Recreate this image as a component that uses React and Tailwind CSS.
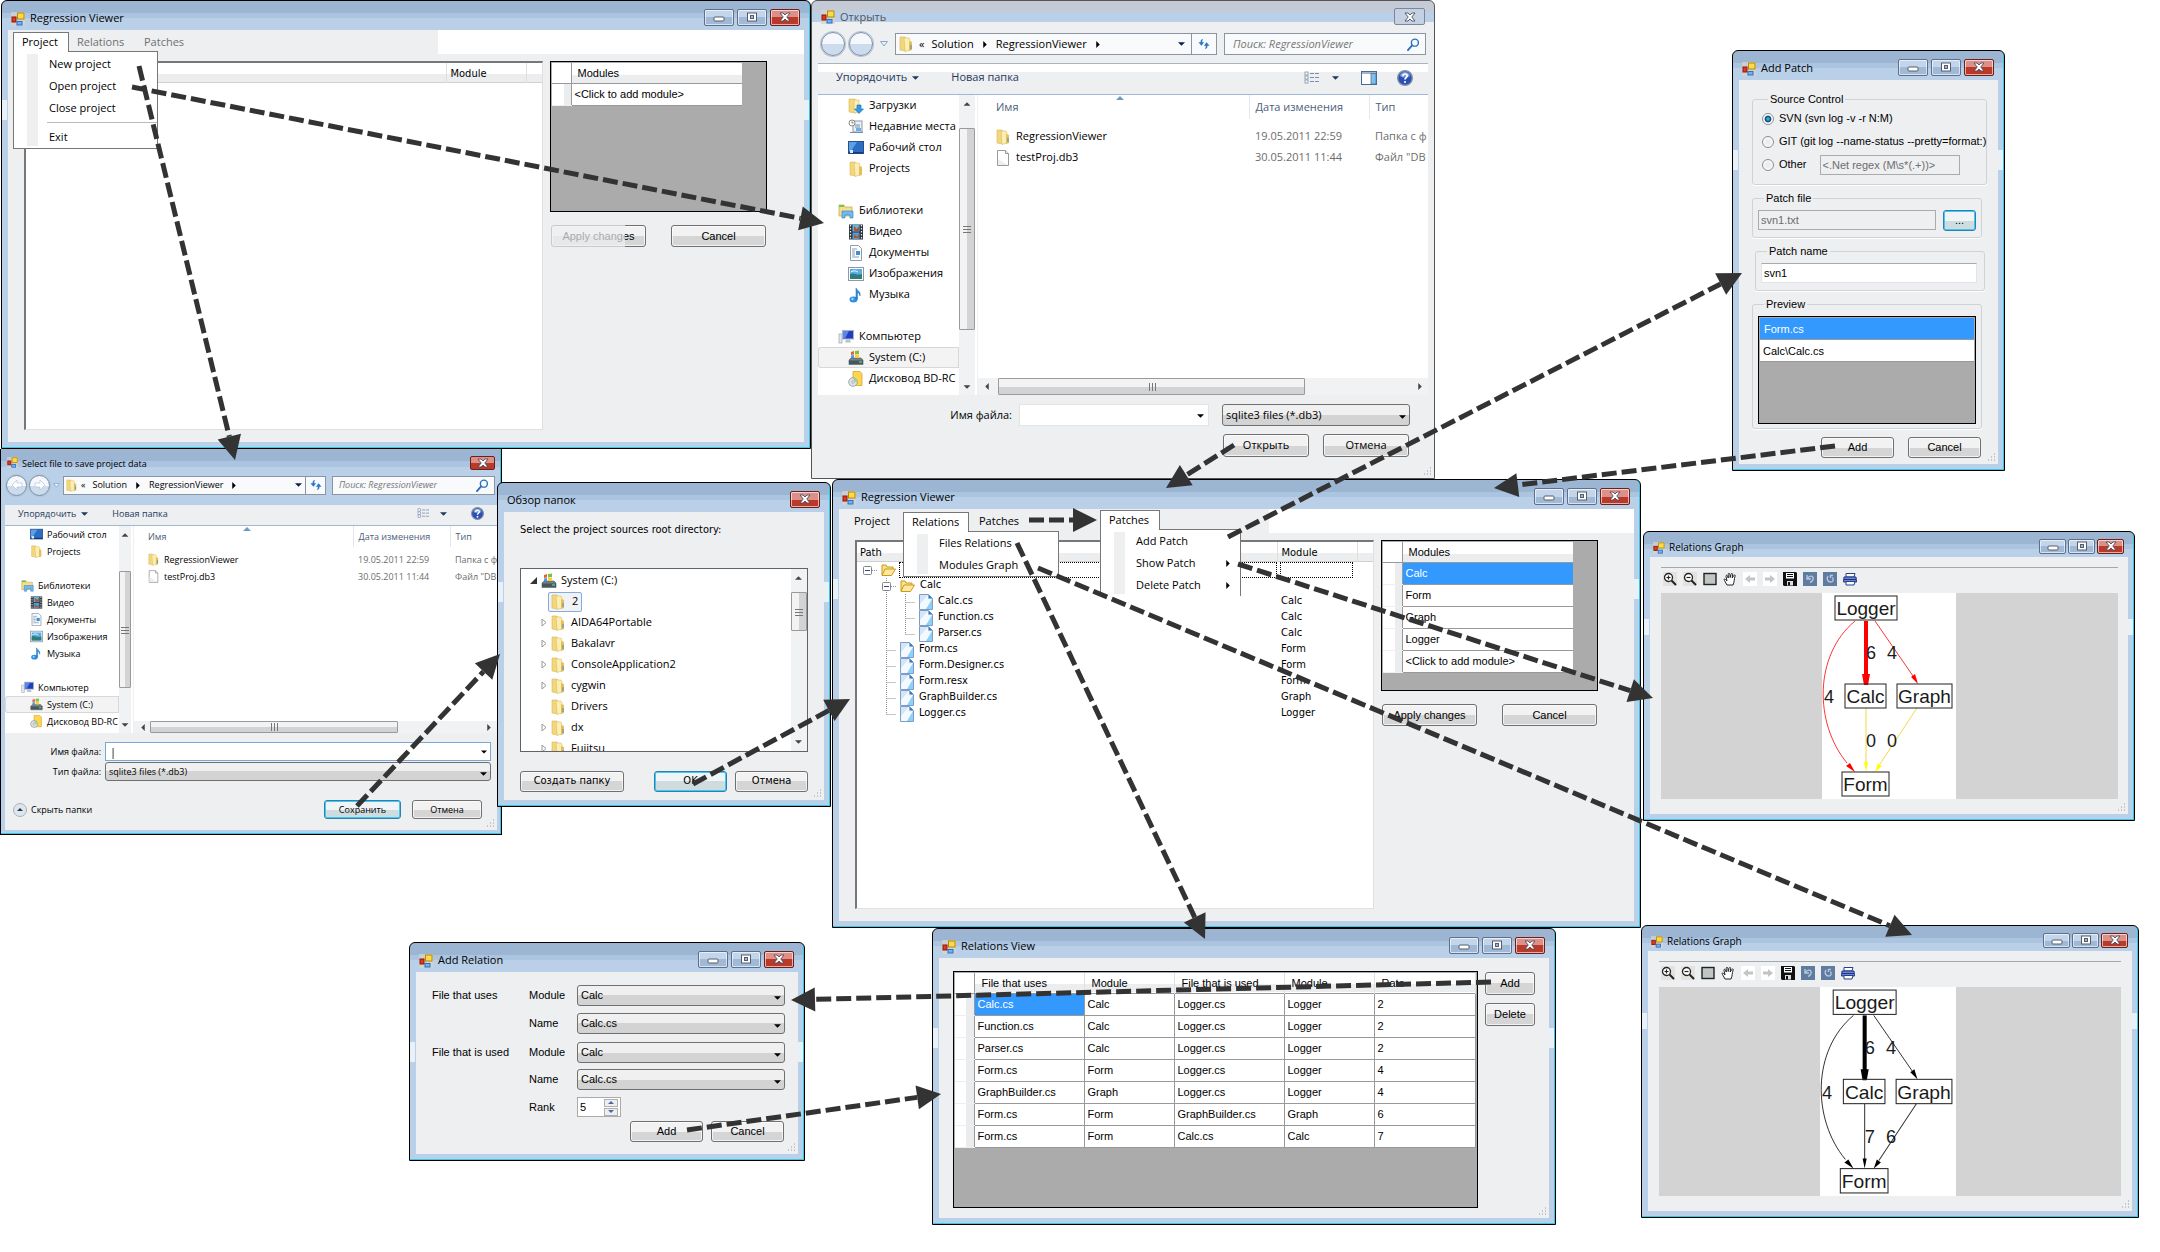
import React from "react";

const UI = "font-['Open_Sans','Noto_Sans',sans-serif]";
const SANS = "font-['Liberation_Sans',Arial,sans-serif]";
const TAHOMA = "font-['DejaVu_Sans_Condensed','DejaVu_Sans',sans-serif]";

/* ---------- icons ---------- */

function AppIcon({ className = "size-[14px]" }) {
  return (
    <svg viewBox="0 0 14 14" className={className} aria-hidden="true">
      <rect x="0" y="0" width="14" height="14" fill="#d8d4cc" opacity=".7" />
      <rect x="1" y="5" width="4" height="5" fill="#e03a1e" stroke="#8e1608" />
      <rect x="6.500" y="1" width="6.500" height="6" fill="#ffd84a" stroke="#b58a00" />
      <rect x="6" y="9.500" width="5" height="3.500" fill="#6fb2f5" stroke="#2f6fc4" />
    </svg>
  );
}

function Folder({ className }) {
  return (
    <svg viewBox="0 0 14 16" className={className} aria-hidden="true">
      <path d="M1 1h5l1 2v12l-6-1z" fill="#f3d77d" stroke="#d9b650" strokeWidth=".6" />
      <path d="M5 2h5l1 2v10l-5 1.500z" fill="#fbeeb4" stroke="#dcbc5c" strokeWidth=".6" />
      <path d="M10 5l3 1v8l-3 1z" fill="#e7bf58" />
      <path d="M12 9v4" stroke="#3f8fd0" strokeWidth="1" />
    </svg>
  );
}

function OpenFolder() {
  return (
    <svg viewBox="0 0 15 14" className="h-[14px] w-[15px] shrink-0" aria-hidden="true">
      <path d="M1 12V2h4l1 2h6v2" fill="#fbe08a" stroke="#c79a1b" />
      <path d="M1 12.500L4 6h10.500l-4 6.500z" fill="#ffe9a0" stroke="#c79a1b" />
    </svg>
  );
}

function CodeFile() {
  return (
    <svg viewBox="0 0 14 16" className="h-4 w-[14px] shrink-0" aria-hidden="true">
      <path d="M.5 .5h9l4 4v11H.5z" fill="#d3e6f7" stroke="#7f9cc4" />
      <path d="M1 10L9 1v4h4v2L7 15H1z" fill="#f4f9fe" />
      <path d="M13 5v10H7z" fill="#8fd0fb" />
      <path d="M9.500 .5v4h4z" fill="#3a78c8" />
    </svg>
  );
}

function BlankFile({ className }) {
  return (
    <svg viewBox="0 0 14 16" className={className} aria-hidden="true">
      <path d="M1.500 .5h8l3 3v12h-11z" fill="#fff" stroke="#9a9a9a" />
      <path d="M2 9l10 6H2z" fill="#eee" />
      <path d="M9.500 .5v3h3" fill="#eee" stroke="#9a9a9a" />
    </svg>
  );
}

function PlaceIcon({ kind, className }) {
  const shapes = {
    downloads: (
      <>
        <path d="M1 1h6l1 2v12l-7-1z" fill="#f3d77d" stroke="#d9b650" strokeWidth=".6" />
        <path d="M6 2h5v12l-5 1z" fill="#fbeeb4" stroke="#dcbc5c" strokeWidth=".6" />
        <path d="M9 7h4v4h2.500L11 15.500 6.500 11H9z" fill="#2f9be8" stroke="#1668b0" strokeWidth=".6" />
      </>
    ),
    recent: (
      <>
        <rect x="5" y="2" width="9" height="11" fill="#eef2f6" stroke="#8b97a5" />
        <path d="M7 6h5M7 8h5M2 13.500h13" stroke="#6f8fb0" />
        <path d="M8 9h5v3H8z" fill="#6fb0e0" />
        <circle cx="4" cy="4" r="3" fill="#fff" stroke="#888" />
        <path d="M4 2.500V4h1.500" stroke="#555" fill="none" strokeWidth=".8" />
      </>
    ),
    desktop: (
      <>
        <rect x=".5" y="1.500" width="15" height="12" fill="#2a6fc4" stroke="#2b4f86" />
        <path d="M1 2h8L3 11H1z" fill="#5ea0e6" />
        <path d="M1 12h14v1.500H1z" fill="#173a70" />
        <path d="M2 10h3v3H2z" fill="#dcecff" />
      </>
    ),
    libraries: (
      <>
        <path d="M1 2h5l1 2h7v9H1z" fill="#f6df8c" stroke="#c9a544" strokeWidth=".7" />
        <path d="M1 2h5v2H1z" fill="#7cc256" />
        <path d="M4 8h11v7h-3v-3H7v3H4z" fill="#6dbbf2" stroke="#3a88c8" strokeWidth=".7" />
      </>
    ),
    video: (
      <>
        <rect x="1" y=".5" width="14" height="15" fill="#2d333b" />
        <path d="M4.500 1h7v6.500h-7z" fill="#5db8e8" />
        <path d="M4.500 8.500h7V15h-7z" fill="#4a9fd4" />
        <path d="M6 2l3 3 2-3v5H6zM6 10l3 3 2-3v4H6z" fill="#b5502e" />
        <path d="M2.500 1v14M13.500 1v14" stroke="#e8eef2" strokeDasharray="1.500 1.500" strokeWidth="1.200" />
      </>
    ),
    documents: (
      <>
        <path d="M2.500 .5h8l3 3v12h-11z" fill="#fff" stroke="#8b9db0" />
        <path d="M4 4h5M4 6h3M4 8h3M4 10h3M4 12h7" stroke="#7a90a8" strokeWidth=".9" />
        <path d="M8 6h4v4H8z" fill="#3f8fd6" />
      </>
    ),
    pictures: (
      <>
        <rect x=".5" y="1.500" width="15" height="13" fill="#fff" stroke="#8d99a5" />
        <rect x="2" y="3" width="12" height="10" fill="#5aaee8" />
        <path d="M2 8c4-2 6 2 12 0v5H2z" fill="#2f7d78" />
        <path d="M3 6c3-2 5-1 7 0" stroke="#fff" fill="none" />
      </>
    ),
    music: (
      <>
        <ellipse cx="5.500" cy="12.500" rx="4" ry="3" fill="#2f8fe0" />
        <path d="M8 12V1c1 3 5 3 4 8-.5-3-2-3.500-2.500-3.500V12z" fill="#2f8fe0" stroke="#1b66b4" strokeWidth=".5" />
        <circle cx="4.500" cy="12" r="1.200" fill="#a6d8ff" />
      </>
    ),
    computer: (
      <>
        <rect x="1" y="5" width="3" height="9" fill="#e5e9ed" stroke="#98a3ae" strokeWidth=".7" />
        <rect x="4.500" y="1.500" width="11" height="8.500" fill="#1f3fc0" stroke="#aab4c0" />
        <path d="M5 2h6L7 9.500H5z" fill="#5b84ee" />
        <path d="M8 10.500h4l1 3H7z" fill="#b9c2cc" />
      </>
    ),
    drive: (
      <>
        <path d="M1 10l2-2h10l2 2v4.500H1z" fill="#71808c" stroke="#4b5863" strokeWidth=".6" />
        <path d="M1 10.500h14V14H1z" fill="#46565f" />
        <path d="M11 12h3" stroke="#56e070" strokeWidth="1.200" />
        <path d="M3 2l3-1v3.500L3 5z" fill="#f0602a" />
        <path d="M7 1l4-.5v3.500L7 4.500z" fill="#7cc23c" />
        <path d="M3 5.500L6 5v3H3z" fill="#4b9ae8" />
        <path d="M7 5l4-.5v3.500H7z" fill="#ffcd2e" />
      </>
    ),
    disc: (
      <>
        <path d="M5 .5h7l2 2v12H5z" fill="#ffd650" stroke="#d39f18" strokeWidth=".7" />
        <circle cx="5" cy="11" r="4.300" fill="#dfe3e6" stroke="#8d959c" strokeWidth=".8" />
        <circle cx="5" cy="11" r="1.300" fill="#fff" stroke="#8d959c" strokeWidth=".7" />
        <path d="M5 7a4 4 0 0 1 4 4H6.500z" fill="#9fd49a" />
      </>
    ),
    folder: (
      <>
        <path d="M2 1h5l1 2v12l-6-1z" fill="#f3d77d" stroke="#d9b650" strokeWidth=".6" />
        <path d="M6 2h5l1 2v10l-5 1.500z" fill="#fbeeb4" stroke="#dcbc5c" strokeWidth=".6" />
        <path d="M11 5l3 1v8l-3 1z" fill="#e7bf58" />
      </>
    ),
  };
  return (
    <svg viewBox="0 0 16 16" className={className} aria-hidden="true">
      {shapes[kind]}
    </svg>
  );
}

function Caret({ className = "h-[4px] w-[7px]" }) {
  return (
    <svg viewBox="0 0 8 4" className={className} aria-hidden="true">
      <path d="M0 0h8L4 4z" fill="currentColor" />
    </svg>
  );
}

function RightCaret({ className = "h-2 w-1" }) {
  return (
    <svg viewBox="0 0 4 8" className={className} aria-hidden="true">
      <path d="M0 0v8l4-4z" fill="currentColor" />
    </svg>
  );
}

function Magnifier({ className }) {
  return (
    <svg viewBox="0 0 14 14" className={className} aria-hidden="true">
      <circle cx="8.500" cy="5" r="3.800" fill="none" stroke="#2a6fc0" strokeWidth="1.500" />
      <path d="M5.500 8L1 13" stroke="#2a6fc0" strokeWidth="2" strokeLinecap="round" />
    </svg>
  );
}

function RefreshIcon({ className }) {
  return (
    <svg viewBox="0 0 14 14" className={className} aria-hidden="true">
      <path d="M6 1C3 2 3 3 3 5H.5L4 9l3.200-4H5c0-2 0-2 1-4z" fill="#2a78cc" />
      <path d="M8 13c3-1 3-2 3-4h2.500L10 5 6.800 9H9c0 2 0 2-1 4z" fill="#2a78cc" />
    </svg>
  );
}

function ViewIcon({ className }) {
  return (
    <svg viewBox="0 0 16 14" className={className} aria-hidden="true">
      {[1, 5, 9].map((y) => (
        <g key={y}>
          <rect x="1" y={y} width="3" height="3" fill="#fff" stroke="#7a8fae" strokeWidth=".8" />
          <path d={`M6 ${y + 1.5}h4M11 ${y + 1.5}h4`} stroke="#7a8fae" />
        </g>
      ))}
    </svg>
  );
}

function HelpIcon({ className }) {
  return (
    <svg viewBox="0 0 16 16" className={className} aria-hidden="true">
      <circle cx="8" cy="8" r="7.300" fill="#2b50b4" stroke="#8490a4" strokeWidth="1.400" />
      <path d="M3 6a5 4 0 0 1 10 0c-3 2-7 2-10 0z" fill="#7e9be0" />
      <path d="M5.800 6.200c0-3 4.600-2.800 4.400-.2C10 7.600 8 7.700 8 9.600" fill="none" stroke="#fff" strokeWidth="1.700" />
      <circle cx="8" cy="12" r="1.100" fill="#fff" />
    </svg>
  );
}

function Grip() {
  return (
    <svg viewBox="0 0 9 9" className="absolute right-[2px] bottom-[2px] size-[9px]" aria-hidden="true">
      <path d="M7 1h1M7 4h1M4 4h1M7 7h1M4 7h1M1 7h1" stroke="#b4b8bc" strokeWidth="1.500" />
    </svg>
  );
}

/* ---------- window frame ---------- */

function WindowButtons({ small, only }) {
  const size = small ? "h-[15px] w-[27px]" : "h-[17px] w-[30px]";
  const base = `${size} flex items-center justify-center rounded-[2px] border shadow-[inset_0_0_0_1px_rgba(255,255,255,.6)]`;
  const blue = "border-[#5d6f8a] bg-[linear-gradient(#c3d5ea_0_50%,#a0b9d6_50%)]";
  return (
    <div className={small ? "flex gap-[2px]" : "flex gap-[3px]"}>
      {!only && (
        <>
          <button aria-label="Minimize" className={`${base} ${blue}`}>
            <svg viewBox="0 0 12 12" className="size-3"><rect x="1" y="6" width="10" height="4" rx="1" fill="#fff" stroke="#555d6b" /></svg>
          </button>
          <button aria-label="Maximize" className={`${base} ${blue}`}>
            <svg viewBox="0 0 12 12" className="size-3"><rect x="1.500" y="2" width="9" height="8" fill="#fff" stroke="#555d6b" /><rect x="4.500" y="4.500" width="3" height="3" fill="#a0b9d6" stroke="#555d6b" /></svg>
          </button>
        </>
      )}
      <button aria-label="Close" className={`${base} border-[#6d1f18] bg-[linear-gradient(#dc9088_0_50%,#b93a2a_50%)]`}>
        <CloseGlyph />
      </button>
    </div>
  );
}

function CloseGlyph() {
  return (
    <svg viewBox="0 0 12 10" className="h-[10px] w-3" aria-hidden="true">
      <path d="M1 1h3l2 2 2-2h3L7.800 5 11 9H8L6 7 4 9H1l3.200-4z" fill="#fff" stroke="#4b4f5e" strokeWidth=".9" />
    </svg>
  );
}

function Window({ place, title, icon = true, small, only, children, head = "h-[29px]" }) {
  const notch = small ? "top-[87px] h-4" : "top-[99px] h-5";
  return (
    <section
      aria-label={title}
      className={`absolute flex flex-col rounded-t-[6px] border border-black bg-[linear-gradient(#9cb5d3_0_12px,#abc4e0_12px_17px,#b9d0e8_17px)] px-[6px] pb-[6px] shadow-[inset_-1px_-1px_0_#35c8e4] ${place}`}
    >
      <span className={`absolute left-0 w-[5px] bg-[#e9f0f7] ${notch}`} />
      <span className={`absolute right-[1px] w-[5px] bg-[#e9f0f7] ${notch}`} />
      <header className={`flex shrink-0 items-center pt-[6px] pr-1 pl-[3px] ${head}`}>
        {icon && <AppIcon className={small ? "mr-[4px] size-3" : "mr-[5px] size-[14px]"} />}
        <h2 className={`flex-1 text-black ${UI} ${small ? "text-[10px]" : "text-[11px]"}`}>{title}</h2>
        <div className="pb-[3px]"><WindowButtons small={small} only={only} /></div>
      </header>
      <div className="relative flex min-h-0 flex-1 flex-col bg-[#edeff1]">{children}</div>
    </section>
  );
}

const BTN = `flex items-center justify-center rounded-[3px] border border-[#707070] bg-[linear-gradient(#f2f2f2_0_50%,#d5d5d5_50%)] text-black shadow-[inset_0_0_0_1px_rgba(255,255,255,.7)]`;
const BTN_FOCUS = `flex items-center justify-center rounded-[3px] border border-[#2f7fb0] bg-[linear-gradient(#f0f4f6_0_50%,#cfdcdf_50%)] text-black shadow-[inset_0_0_0_1px_#3fcaf0]`;

function Select({ label, value, className, font = SANS, text = "text-[11px]" }) {
  return (
    <span className={`relative block ${className}`}>
      <select
        aria-label={label}
        defaultValue={value}
        className={`h-full w-full appearance-none rounded-[3px] border border-[#707070] bg-[linear-gradient(#f0f0f0_0_50%,#d3d3d3_50%)] pl-[3px] text-black ${font} ${text}`}
      >
        <option>{value}</option>
      </select>
      <Caret className="pointer-events-none absolute top-1/2 right-[4px] h-1 w-[7px]" />
    </span>
  );
}

/* ---------- main window ---------- */

const HEAD_BG = "bg-[linear-gradient(#fff_0_60%,#ebedef_60%)]";

function TreeSlot({ kind }) {
  const d = {
    line: "M9.5 0v16",
    tee: "M9.5 0v16M9.5 8.5H19",
    end: "M9.5 0v8.5M9.5 8.5H19",
    root: "M14 8.5h5",
    node: "M9.5 0v16M14 8.500h5",
  }[kind];
  return (
    <svg viewBox="0 0 19 16" className="h-4 w-[19px] shrink-0" aria-hidden="true">
      {d && <path d={d} stroke="#909090" strokeDasharray="1 1" fill="none" />}
      {(kind === "root" || kind === "node") && (
        <g>
          <rect x="5.500" y="4.500" width="8" height="8" rx="1" fill="#fff" stroke="#848484" />
          <path d="M7 8.500h5" stroke="#2a4a9a" />
        </g>
      )}
    </svg>
  );
}

const TREE = [
  { slots: ["blank", "node"], name: "Calc", folder: true, module: "" },
  { slots: ["blank", "line", "tee"], name: "Calc.cs", module: "Calc" },
  { slots: ["blank", "line", "tee"], name: "Function.cs", module: "Calc" },
  { slots: ["blank", "line", "end"], name: "Parser.cs", module: "Calc" },
  { slots: ["blank", "tee"], name: "Form.cs", module: "Form" },
  { slots: ["blank", "tee"], name: "Form.Designer.cs", module: "Form" },
  { slots: ["blank", "tee"], name: "Form.resx", module: "Form" },
  { slots: ["blank", "tee"], name: "GraphBuilder.cs", module: "Graph" },
  { slots: ["blank", "end"], name: "Logger.cs", module: "Logger" },
];

function FileTree({ filled }) {
  return (
    <div className="h-[369px] w-[519px] shrink-0 border border-t-2 border-l-2 border-[#e0e0e0] border-t-[#777] border-l-[#777] bg-white">
      <table className={`w-full table-fixed border-collapse text-left text-[11px] ${TAHOMA}`}>
        <colgroup>
          <col className="w-[420px]" />
          <col className="w-[80px]" />
          <col />
        </colgroup>
        <thead>
          <tr className={`h-[19px] border-b border-[#d0d0d0] ${HEAD_BG}`}>
            <th className="border-r border-[#e0e0e0] pt-[3px] pb-0 pl-[3px] leading-4 font-normal">{filled ? "Path" : ""}</th>
            <th className="border-r border-[#e0e0e0] pt-[3px] pb-0 pl-[4px] leading-4 font-normal">Module</th>
            <th />
          </tr>
        </thead>
        {filled && (
          <tbody>
            <tr className="h-4">
              <td className="p-0">
                <div className="flex h-4 items-center pl-[1px]">
                  <TreeSlot kind="root" />
                  <span className="w-1" />
                  <OpenFolder />
                  <span className="ml-[3px] h-4 flex-1 border border-dotted border-black" />
                </div>
              </td>
              <td className="py-0 pr-1 pl-[3px]"><div className="h-4 border border-dotted border-black" /></td>
              <td />
            </tr>
            {TREE.map((r) => (
              <tr key={r.name} className="h-4">
                <td className="p-0">
                  <div className="flex h-4 items-center pl-[1px]">
                    {r.slots.map((s, i) => <TreeSlot key={i} kind={s} />)}
                    <span className="w-1" />
                    {r.folder ? <OpenFolder /> : <CodeFile />}
                    <span className="pb-[2px] pl-[5px] leading-[14px]">{r.name}</span>
                  </div>
                </td>
                <td className="py-0 pb-[2px] pl-[4px] leading-[14px]">{r.module}</td>
                <td />
              </tr>
            ))}
          </tbody>
        )}
      </table>
    </div>
  );
}

function ModulesGrid({ modules }) {
  const rows = [...modules, "<Click to add module>"];
  return (
    <div className="h-[151px] border border-black bg-[#ababab] p-[1px]">
      <table className={`w-[190px] table-fixed border-collapse text-left text-[11px] ${SANS}`}>
        <colgroup>
          <col className="w-[19px]" />
          <col />
        </colgroup>
        <thead>
          <tr className="h-[20px] border-b border-[#999]">
            <th className="border-r border-[#999] bg-white" />
            <th className={`pl-[6px] font-normal ${HEAD_BG}`}>Modules</th>
          </tr>
        </thead>
        <tbody>
          {rows.map((m, i) => (
            <tr key={m} className="h-[22px]">
              <td className="border-r border-b border-r-[#999] border-b-[#eee] bg-[linear-gradient(90deg,#fff_0_65%,#eaecee_65%)]" />
              <td className={`border-b border-[#999] py-0 pl-[3px] ${modules.length && i === 0 ? "bg-[#3399ff] text-white" : "bg-white"}`}>{m}</td>
            </tr>
          ))}
        </tbody>
      </table>
    </div>
  );
}

function DropItem({ children, sub }) {
  return (
    <li>
      <button className="flex h-[22px] w-full items-center pl-[35px] text-left leading-[22px]">
        <span className="flex-1">{children}</span>
        {sub && <RightCaret className="mr-[10px] h-[7px] w-1" />}
      </button>
    </li>
  );
}

function DropMenu({ className, children }) {
  return (
    <div className={`absolute bg-white ${className}`}>
      <span className="absolute top-[2px] bottom-[2px] left-[13px] w-[11px] bg-[#edeff1]" />
      <ul className="relative">{children}</ul>
    </div>
  );
}

function MainClient({ nav, filled, modules, disabledApply }) {
  return (
    <>
      <div className={`flex h-6 text-[11px] ${UI}`}>
        <nav className="flex w-[430px]">{nav}</nav>
        <div className="flex-1 bg-white" />
      </div>
      <div className="mt-[7px] flex gap-[7px] pl-4">
        <FileTree filled={filled} />
        <div className="w-[217px]">
          <ModulesGrid modules={modules} />
          <div className={`mt-[13px] flex justify-between px-[1px] text-[11px] ${SANS}`}>
            <button className={`relative h-[22px] w-[95px] ${BTN}`}>
              Apply changes
              {disabledApply && <span className="absolute -inset-y-px -left-px w-[74px] bg-[#edeff1]/70" />}
            </button>
            <button className={`h-[22px] w-[95px] ${BTN}`}>Cancel</button>
          </div>
        </div>
      </div>
    </>
  );
}

function MainWindowProject() {
  return (
    <Window place="left-[1px] top-0 h-[449px] w-[810px]" title="Regression Viewer">
      <MainClient
        modules={[]}
        disabledApply
        nav={
          <>
            <button className="relative z-20 mt-[2px] ml-[5px] h-[20px] w-[56px] border border-b-0 border-[#777] bg-white pl-2 text-left">Project</button>
            <button className="w-[67px] pl-2 text-left text-[#6f6f6f]">Relations</button>
            <button className="w-[67px] pl-2 text-left text-[#6f6f6f]">Patches</button>
            <DropMenu className="top-[21px] left-[5px] z-10 h-[98px] w-[145px] border border-[#777] pt-[1px]">
              <DropItem>New project</DropItem>
              <DropItem>Open project</DropItem>
              <DropItem>Close project</DropItem>
              <li className="my-[3px] ml-[33px] h-[1px] bg-[#bbb]" />
              <DropItem>Exit</DropItem>
            </DropMenu>
          </>
        }
      />
    </Window>
  );
}

function MainWindowLoaded() {
  return (
    <Window place="left-[832px] top-[479px] h-[449px] w-[809px]" title="Regression Viewer">
      <MainClient
        filled
        modules={["Calc", "Form", "Graph", "Logger"]}
        nav={
          <>
            <button className="w-[64px] pl-[15px] text-left">Project</button>
            <button className="relative z-20 mt-[3px] h-[20px] w-[66px] border border-b-0 border-[#777] bg-white pl-2 text-left">Relations</button>
            <button className="w-[60px] pl-[10px] text-left">Patches</button>
            <DropMenu className="top-[22px] left-[64px] z-10 w-[156px] border border-[#777]">
              <DropItem>Files Relations</DropItem>
              <DropItem>Modules Graph</DropItem>
            </DropMenu>
            <div className="absolute top-[1px] left-[261px] z-10 w-[140px]">
              <button className="relative z-20 h-[20px] w-[60px] border border-b-0 border-[#777] bg-white pl-2 text-left">Patches</button>
              <DropMenu className="top-[19px] left-0 w-[141px] border border-b-0 border-[#777]">
                <DropItem>Add Patch</DropItem>
                <DropItem sub>Show Patch</DropItem>
                <DropItem sub>Delete Patch</DropItem>
              </DropMenu>
            </div>
          </>
        }
      />
    </Window>
  );
}

/* ---------- file dialogs ---------- */

const LG = {
  text: "text-[11px]",
  nav: "h-[42px] pl-[9px] pr-[8px]",
  circle: "size-6",
  circleGap: "gap-[4px]",
  caretGap: "mx-[7px] h-[6px] w-[8px]",
  address: "h-[22px]",
  addrFolder: "h-4 w-[14px] ml-[3px] mr-[6px]",
  addrCaret: "mr-[6px] h-1 w-[7px]",
  refresh: "w-[25px]",
  search: "w-[202px] ml-[7px] pl-[8px]",
  toolbar: "h-[30px] pr-[24px] pl-[24px] pb-[3px]",
  body: "mx-[6px] h-[301px]",
  side: "w-[141px]",
  item: "h-[21px]",
  child: "pl-[30px]",
  parent: "pl-[20px]",
  icon: "size-4 mr-[5px]",
  vbar: "w-[16px]",
  thumb: "mt-[33px] h-[202px]",
  sort: "left-[138px]",
  cols: ["w-[271px]", "w-[120px]"],
  name: "pl-[18px]",
  cell: "pl-[6px]",
  thead: "h-[24px]",
  spacer: "h-[7px]",
  row: "h-[21px]",
  hbar: "h-[17px]",
  hthumb: "ml-[9px] w-[307px]",
  fileIcon: "h-4 w-[14px] mr-[6px]",
};
const SM = {
  text: "text-[9px]",
  nav: "h-[26px] pl-[5px] pr-[6px]",
  circle: "size-[21px]",
  circleGap: "gap-[2px]",
  caretGap: "mx-[3px] h-[5px] w-[7px]",
  address: "h-[19px]",
  addrFolder: "h-[13px] w-[11px] ml-[2px] mr-[4px]",
  addrCaret: "mr-[3px] h-1 w-[7px]",
  refresh: "w-5",
  search: "w-[163px] ml-[6px] pl-[6px]",
  toolbar: "h-[20px] px-[16px] pb-[3px]",
  body: "mx-[3px] h-[208px]",
  side: "w-[114px]",
  item: "h-[17px]",
  child: "pl-[25px]",
  parent: "pl-[16px]",
  icon: "size-[13px] mr-[4px]",
  vbar: "w-[12px]",
  thumb: "mt-[45px] h-[117px]",
  sort: "left-[109px]",
  cols: ["w-[219px]", "w-[97px]"],
  name: "pl-[14px]",
  cell: "pl-[5px]",
  thead: "h-[21px]",
  spacer: "h-[4px]",
  row: "h-[17px]",
  hbar: "h-[12px]",
  hthumb: "ml-[5px] w-[248px]",
  fileIcon: "h-[13px] w-[11px] mr-[5px]",
};

const LIBS = [
  null,
  ["libraries", "Библиотеки", true],
  ["video", "Видео"],
  ["documents", "Документы"],
  ["pictures", "Изображения"],
  ["music", "Музыка"],
  null,
  ["computer", "Компьютер", true],
  ["drive", "System (C:)", false, true],
  ["disc", "Дисковод BD-RC"],
];
const FILES = [
  ["RegressionViewer", "19.05.2011 22:59", "Папка с ф"],
  ["testProj.db3", "30.05.2011 11:44", 'Файл "DB'],
];

function DialogNav({ s, arrows }) {
  const circle = `${s.circle} flex items-center justify-center rounded-full border border-[#7f8fa3] bg-[linear-gradient(#f4f8fc_0_50%,#cddcec_50%)] shadow-[0_0_0_1px_#b4c6da]`;
  return (
    <div className={`flex shrink-0 items-center ${s.nav} ${s.text}`}>
      <div className={`flex ${s.circleGap}`}>
        <button aria-label="Back" className={circle}>
          {arrows && <svg viewBox="0 0 12 12" className="size-3"><path d="M6 1v3h5v4H6v3L1 6z" fill="#fff" stroke="#a9bdd3" strokeWidth=".6" /></svg>}
        </button>
        <button aria-label="Forward" className={circle}>
          {arrows && <svg viewBox="0 0 12 12" className="size-3"><path d="M6 1v3H1v4h5v3l5-5z" fill="#fff" stroke="#a9bdd3" strokeWidth=".6" /></svg>}
        </button>
      </div>
      <svg viewBox="0 0 8 6" className={s.caretGap}><path d="M.5 .5h7L4 5z" fill="#e6f0fa" stroke="#8ea7c6" /></svg>
      <div className={`flex flex-1 items-center border border-[#8a94a2] bg-[#f8fafb] ${s.address}`}>
        <Folder className={s.addrFolder} />
        <span className="mr-[7px]">«</span>
        <span className="mr-[9px]">Solution</span>
        <RightCaret className="h-[7px] w-1" />
        <span className="mx-[9px]">RegressionViewer</span>
        <RightCaret className="h-[7px] w-1" />
        <span className="flex-1" />
        <Caret className={`text-[#0b1f4a] ${s.addrCaret}`} />
        <button aria-label="Refresh" className={`flex h-full items-center justify-center border-l border-[#8a94a2] ${s.refresh}`}>
          <RefreshIcon className="size-3" />
        </button>
      </div>
      <div className={`flex items-center border border-[#8a94a2] bg-[#f8fafb] pr-[5px] ${s.address} ${s.search}`}>
        <input aria-label="Поиск" placeholder="Поиск: RegressionViewer" className="min-w-0 flex-1 bg-transparent italic outline-none placeholder:text-[#777]" />
        <Magnifier className="size-[13px]" />
      </div>
    </div>
  );
}

function DialogBody({ s, places, preview }) {
  const bar = "border border-[#9a9a9a] rounded-[1px]";
  return (
    <>
      <div className={`flex shrink-0 items-center text-[#1e395b] ${s.toolbar} ${s.text}`}>
        <button className="flex items-center gap-[5px]">Упорядочить <Caret className="h-1 w-[7px]" /></button>
        <button className={preview ? "ml-[32px]" : "ml-[24px]"}>Новая папка</button>
        <span className="flex-1" />
        <button aria-label="Views" className={`flex items-center ${preview ? "gap-[12px]" : "gap-[10px]"}`}>
          <ViewIcon className={preview ? "h-[14px] w-4" : "h-[11px] w-[13px]"} />
          <Caret className="h-1 w-[7px]" />
        </button>
        {preview && (
          <button aria-label="Preview pane" className="mr-[20px] ml-[22px]">
            <svg viewBox="0 0 16 14" className="h-[14px] w-4"><rect x=".5" y=".5" width="15" height="13" fill="#fff" stroke="#4b6a94" /><path d="M1 2h14" stroke="#4b6a94" /><rect x="10" y="2.500" width="5" height="10.500" fill="#7cc0f0" stroke="#4b6a94" strokeWidth=".7" /></svg>
          </button>
        )}
        <button aria-label="Help" className={preview ? "-mr-[3px]" : "ml-[24px]"}>
          <HelpIcon className={preview ? "size-4" : "size-[13px]"} />
        </button>
      </div>
      <div className={`flex shrink-0 border-t border-[#9db9d8] bg-white ${s.body} ${s.text}`}>
        <ul className={`overflow-hidden whitespace-nowrap ${s.side}`}>
          {[...places, ...LIBS].map((p, i) =>
            p ? (
              <li key={i} className={`flex items-center ${s.item} ${p[2] ? s.parent : s.child} ${p[3] ? "rounded-l-[3px] bg-[#f3f3f3] shadow-[inset_0_0_0_1px_#d8d8d8]" : ""}`}>
                <PlaceIcon kind={p[0]} className={`shrink-0 ${s.icon}`} />
                {p[1]}
              </li>
            ) : (
              <li key={i} className={s.item} />
            )
          )}
        </ul>
        <div className={`relative bg-[#f1f2f3] ${s.vbar}`}>
          <svg viewBox="0 0 8 4" className="absolute top-[7px] left-1/2 h-[4px] w-[7px] -translate-x-1/2"><path d="M0 4h8L4 0z" fill="#444" /></svg>
          <div className={`flex items-center justify-center bg-[linear-gradient(90deg,#f3f3f3_0_50%,#d2d3d5_50%)] ${bar} ${s.thumb}`}>
            <svg viewBox="0 0 8 8" className="size-2"><path d="M0 1.500h8M0 4.500h8M0 7.500h8" stroke="#777" /></svg>
          </div>
          <Caret className="absolute bottom-[6px] left-1/2 h-[4px] w-[7px] -translate-x-1/2 text-[#444]" />
        </div>
        <div className="ml-[2px] flex min-w-0 flex-1 flex-col overflow-hidden border-l border-[#eef1f4]">
          <div className="relative min-h-0 flex-1">
            <svg viewBox="0 0 8 4" className={`absolute top-[1px] h-1 w-2 ${s.sort}`}><path d="M0 4h8L4 0z" fill="#6a9cc4" /></svg>
            <table className="w-full table-fixed border-collapse text-left whitespace-nowrap">
              <colgroup>
                <col className={s.cols[0]} />
                <col className={s.cols[1]} />
                <col />
              </colgroup>
              <thead>
                <tr className={`text-[#4c607a] ${s.thead}`}>
                  <th className={`border-r border-[#e3e8ee] py-0 font-normal ${s.name}`}>Имя</th>
                  <th className={`border-r border-[#e3e8ee] py-0 font-normal ${s.cell}`}>Дата изменения</th>
                  <th className={`py-0 font-normal ${s.cell}`}>Тип</th>
                </tr>
              </thead>
              <tbody>
                <tr className={s.spacer}><td className="p-0" /></tr>
                {FILES.map((f, i) => (
                  <tr key={f[0]} className={s.row}>
                    <td className={`py-0 ${s.name}`}>
                      <span className="flex items-center">
                        {i === 0 ? <Folder className={s.fileIcon} /> : <BlankFile className={s.fileIcon} />}
                        {f[0]}
                      </span>
                    </td>
                    <td className={`py-0 text-[#6d6d6d] ${s.cell}`}>{f[1]}</td>
                    <td className={`py-0 text-[#6d6d6d] ${s.cell}`}>{f[2]}</td>
                  </tr>
                ))}
              </tbody>
            </table>
          </div>
          <div className={`flex shrink-0 items-center bg-[#f1f2f3] pr-[6px] pl-[7px] ${s.hbar}`}>
            <RightCaret className="h-[7px] w-1 rotate-180 text-[#444]" />
            <div className={`flex h-full items-center justify-center bg-[linear-gradient(#f3f3f3_0_50%,#d2d3d5_50%)] ${bar} ${s.hthumb}`}>
              <svg viewBox="0 0 8 8" className="size-2"><path d="M1.500 0v8M4.500 0v8M7.500 0v8" stroke="#777" /></svg>
            </div>
            <span className="flex-1" />
            <RightCaret className="h-[7px] w-1 text-[#444]" />
          </div>
        </div>
      </div>
    </>
  );
}

function OpenDialog() {
  return (
    <section
      aria-label="Открыть"
      className={`absolute top-0 left-[811px] flex h-[479px] w-[624px] flex-col rounded-t-[6px] border border-[#555] bg-[linear-gradient(#c5cbd6_0_11px,#b9d0e8_11px_21px,#edeff1_21px)] ${UI}`}
    >
      <header className="flex h-[22px] shrink-0 items-start px-[9px]">
        <AppIcon className="mt-[9px] size-[14px]" />
        <h2 className="mt-[8px] ml-[5px] flex-1 text-[11px] leading-4 text-[#555]">Открыть</h2>
        <button aria-label="Close" className="mt-[7px] flex h-[17px] w-[31px] items-center justify-center rounded-[2px] border border-[#7c879a] bg-[#c3d1e2]">
          <CloseGlyph />
        </button>
      </header>
      <div className="h-[40px]"><DialogNav s={LG} /></div>
      <div className="mx-[6px] h-[9px] shrink-0 border-t border-[#a9b4c2] bg-white" />
      <div className="-mt-[8px]">
        <DialogBody
          s={LG}
          preview
          places={[["downloads", "Загрузки"], ["recent", "Недавние места"], ["desktop", "Рабочий стол"], ["folder", "Projects"]]}
        />
      </div>
      <div className="mx-[6px] mt-[9px] flex items-center text-[11px]">
        <label htmlFor="open-name" className="w-[194px] text-right">Имя файла:</label>
        <span className="relative ml-[7px] block h-[22px] w-[190px]">
          <input id="open-name" className="h-full w-full border border-[#e2e4e6] bg-white px-1 outline-none" />
          <Caret className="absolute top-[10px] right-[5px] h-1 w-[7px]" />
        </span>
        <Select label="Тип файла" value="sqlite3 files (*.db3)" font={UI} className="ml-[13px] h-[22px] w-[188px]" />
      </div>
      <div className="mt-[8px] ml-[411px] flex gap-[14px] text-[11px]">
        <button className={`h-[23px] w-[86px] ${BTN}`}>Открыть</button>
        <button className={`h-[23px] w-[86px] ${BTN}`}>Отмена</button>
      </div>
      <Grip />
    </section>
  );
}

function SaveDialog() {
  return (
    <section
      aria-label="Select file to save project data"
      className={`absolute top-[449px] left-0 flex h-[386px] w-[502px] flex-col border border-t-0 border-black bg-[linear-gradient(#9cb5d3_0_12px,#abc4e0_12px_18px,#b9d0e8_18px)] pb-[4px] shadow-[inset_-1px_-1px_0_#35c8e4] ${UI}`}
    >
      <span className="absolute top-[79px] right-[1px] h-4 w-[4px] bg-[#e9f0f7]" />
      <header className="flex h-[23px] shrink-0 items-start px-[6px] pt-[7px]">
        <AppIcon className="mt-[1px] size-[11px]" />
        <h2 className="ml-[4px] flex-1 text-[9px] leading-[15px]">Select file to save project data</h2>
        <button aria-label="Close" className="flex h-[14px] w-[25px] items-center justify-center rounded-[2px] border border-[#6d1f18] bg-[linear-gradient(#dc9088_0_50%,#b93a2a_50%)]">
          <CloseGlyph />
        </button>
      </header>
      <DialogNav s={SM} arrows />
      <div className="relative mx-[4px] mt-[7px] flex flex-1 flex-col bg-[#edeff1]">
        <div className="-mx-[3px] flex flex-col">
          <DialogBody s={SM} places={[["desktop", "Рабочий стол"], ["folder", "Projects"]]} />
        </div>
        <div className="mt-[9px] flex items-center text-[9px]">
          <label htmlFor="save-name" className="w-[96px] text-right">Имя файла:</label>
          <span className="relative ml-[4px] block h-[19px] w-[386px]">
            <input id="save-name" defaultValue="|" className="h-full w-full border border-[#7aa7d6] bg-white px-1 text-[11px] outline-none" />
            <Caret className="absolute top-[8px] right-[4px] h-1 w-[6px]" />
          </span>
        </div>
        <div className="mt-[1px] flex items-center text-[9px]">
          <span className="w-[96px] text-right">Тип файла:</span>
          <Select label="Тип файла" value="sqlite3 files (*.db3)" font={UI} text="text-[9px]" className="ml-[4px] h-[19px] w-[386px]" />
        </div>
        <div className="mt-[19px] flex items-center pr-[15px] pl-[8px] text-[9px]">
          <button className="flex items-center gap-[4px]">
            <span className="flex size-[14px] items-center justify-center rounded-full border border-[#a8b2bf] bg-[#dfe5ec]">
              <svg viewBox="0 0 8 4" className="h-[3px] w-[6px]"><path d="M0 4h8L4 0z" fill="#1e395b" /></svg>
            </span>
            Скрыть папки
          </button>
          <span className="flex-1" />
          <button className={`h-[19px] w-[77px] ${BTN_FOCUS}`}>Сохранить</button>
          <button className={`ml-[11px] h-[19px] w-[70px] ${BTN}`}>Отмена</button>
        </div>
        <Grip />
      </div>
    </section>
  );
}

/* ---------- folder browser ---------- */

const FOLDERS = [
  ["AIDA64Portable", true],
  ["Bakalavr", true],
  ["ConsoleApplication2", true],
  ["cygwin", true],
  ["Drivers", false],
  ["dx", true],
  ["Fujitsu", true],
];

function BrowseDialog() {
  return (
    <Window place="left-[497px] top-[482px] h-[325px] w-[334px]" title="Обзор папок" icon={false} only>
      <div className={`flex flex-col pr-[16px] pl-[16px] text-[11px] ${TAHOMA}`}>
        <p className="mt-[10px] leading-4">Select the project sources root directory:</p>
        <div className={`mt-[30px] flex h-[184px] overflow-hidden border border-[#60646a] bg-white ${UI}`}>
          <ul className="flex-1">
            <li className="mt-[1px] flex h-[21px] items-center pl-[9px]">
              <svg viewBox="0 0 7 7" className="size-[7px]"><path d="M7 0v7H0z" fill="#333" /></svg>
              <PlaceIcon kind="drive" className="mx-[4px] size-4" />
              System (C:)
            </li>
            <li className="flex h-[21px] items-center pl-[27px]">
              <span className="flex h-5 items-center gap-[7px] rounded-[2px] border border-[#84acdd] bg-[#f0f2f5] pr-[3px] pl-[2px]">
                <Folder className="h-4 w-[14px]" />2
              </span>
            </li>
            {FOLDERS.map(([name, open]) => (
              <li key={name} className="flex h-[21px] items-center pl-[20px]">
                <svg viewBox="0 0 6 9" className="mr-[4px] h-[9px] w-[6px]">{open && <path d="M1 1v7l4-3.500z" fill="#fff" stroke="#999" />}</svg>
                <Folder className="mr-[6px] h-4 w-[14px]" />
                {name}
              </li>
            ))}
          </ul>
          <div className="relative w-4 bg-[#f1f2f3]">
            <svg viewBox="0 0 8 4" className="absolute top-[7px] left-[4px] h-[4px] w-[7px]"><path d="M0 4h8L4 0z" fill="#444" /></svg>
            <div className="mt-[23px] flex h-[39px] items-center justify-center rounded-[1px] border border-[#9a9a9a] bg-[linear-gradient(90deg,#f3f3f3_0_50%,#d2d3d5_50%)]">
              <svg viewBox="0 0 8 8" className="size-2"><path d="M0 1.500h8M0 4.500h8M0 7.500h8" stroke="#777" /></svg>
            </div>
            <Caret className="absolute bottom-[7px] left-[4px] h-[4px] w-[7px] text-[#444]" />
          </div>
        </div>
        <div className="mt-[19px] flex">
          <button className={`h-[21px] w-[104px] ${BTN}`}>Создать папку</button>
          <span className="flex-1" />
          <button className={`h-[21px] w-[73px] ${BTN_FOCUS}`}>OK</button>
          <button className={`ml-[8px] h-[21px] w-[73px] ${BTN}`}>Отмена</button>
        </div>
      </div>
      <Grip />
    </Window>
  );
}

/* ---------- add patch ---------- */

function Group({ legend, className, children }) {
  return (
    <fieldset className={`rounded-[3px] border border-[#cfd3d6] shadow-[0_1px_0_#fff] ${className}`}>
      <legend className="ml-[6px] px-[2px] leading-[14px]">{legend}</legend>
      {children}
    </fieldset>
  );
}

function Radio({ id, label, checked }) {
  return (
    <div className="flex h-[23px] items-center">
      <input
        type="radio"
        id={id}
        name="scm"
        defaultChecked={checked}
        className="size-3 appearance-none rounded-full border border-[#8a8f94] bg-[radial-gradient(circle,#e8e8e8,#fff)] checked:bg-[radial-gradient(circle,#2fa8e0_0_15%,#0f3f66_40%,#fff_55%)]"
      />
      <label htmlFor={id} className="ml-[5px] whitespace-nowrap">{label}</label>
    </div>
  );
}

function AddPatch() {
  return (
    <Window place="left-[1732px] top-[50px] h-[421px] w-[273px]" title="Add Patch">
      <div className={`flex flex-col px-[13px] text-[11px] ${SANS}`}>
        <Group legend="Source Control" className="mt-[12px] h-[93px] w-[233px] pl-[9px]">
          <div className="mt-[1px]">
            <Radio id="svn" label="SVN (svn log -v -r N:M)" checked />
            <Radio id="git" label="GIT (git log --name-status --pretty=format:)" />
            <div className="flex items-center">
              <Radio id="other" label="Other" />
              <input aria-label="Regex" defaultValue="<.Net regex (M\s*(.+))>" disabled className="ml-[13px] h-5 w-[140px] border border-[#ababab] bg-[#edeff1] px-[2px] text-[#6d6d6d]" />
            </div>
          </div>
        </Group>
        <Group legend="Patch file" className="mt-[6px] h-[47px] w-[230px] px-[5px]">
          <div className="mt-[5px] flex justify-between">
            <input aria-label="Patch file" defaultValue="svn1.txt" disabled className="h-5 w-[178px] border border-[#ababab] bg-[#edeff1] px-[2px] text-[#6d6d6d]" />
            <button aria-label="Browse" className={`h-[21px] w-[33px] ${BTN_FOCUS}`}>...</button>
          </div>
        </Group>
        <Group legend="Patch name" className="mt-[6px] ml-[3px] h-[47px] w-[230px] px-[5px]">
          <input aria-label="Patch name" defaultValue="svn1" className="mt-[5px] block h-[20px] w-[216px] border border-[#e2e3e6] border-t-[#aaa] bg-white px-[2px]" />
        </Group>
        <Group legend="Preview" className="mt-[6px] h-[132px] w-[230px] px-[5px]">
          <div className="mt-[5px] h-[108px] w-[218px] border border-black bg-[#ababab] p-[1px]">
            <ul>
              <li className="h-[22px] border-b border-[#999] bg-[#3399ff] pl-[4px] leading-[22px] text-white">Form.cs</li>
              <li className="h-[22px] border-b border-[#999] bg-white pl-[3px] leading-[22px]">Calc\Calc.cs</li>
            </ul>
          </div>
        </Group>
        <div className="mt-[8px] flex justify-end gap-[14px] pr-[4px]">
          <button className={`h-[21px] w-[73px] ${BTN}`}>Add</button>
          <button className={`h-[21px] w-[73px] ${BTN}`}>Cancel</button>
        </div>
      </div>
      <Grip />
    </Window>
  );
}

/* ---------- relations graph ---------- */

const TOOLS = {
  "Zoom in": (
    <>
      <rect width="14" height="14" fill="#e4e2de" />
      <circle cx="5.500" cy="5.500" r="4" fill="#fff" stroke="#222" strokeWidth="1.300" />
      <path d="M3.500 5.500h4M5.500 3.500v4" stroke="#222" strokeWidth="1.200" />
      <path d="M8.500 8.500L13 13" stroke="#222" strokeWidth="2" />
    </>
  ),
  "Zoom out": (
    <>
      <rect width="14" height="14" fill="#e4e2de" />
      <circle cx="5.500" cy="5.500" r="4" fill="#fff" stroke="#222" strokeWidth="1.300" />
      <path d="M3.500 5.500h4" stroke="#222" strokeWidth="1.200" />
      <path d="M8.500 8.500L13 13" stroke="#222" strokeWidth="2" />
    </>
  ),
  "Window zoom": <rect x="1" y="1.500" width="12" height="11" fill="#c0c6c2" stroke="#222" strokeWidth="1.400" />,
  Pan: (
    <path
      d="M4 13L1.500 8.500c-1-1.500 0-2 1-1L4 9 3 4.500c-.3-1.500 1-1.500 1.500-.3L5.300 6 5.200 2.500c0-1.600 1.500-1.600 1.700 0l.3 3 .8-3.200c.5-1.400 1.800-1 1.600.3L9.200 6l1.500-2.500c.8-1.100 1.900-.4 1.400.7C11 7 11.500 10 10 13z"
      fill="#fff"
      stroke="#222"
      strokeWidth="1"
    />
  ),
  Back: (
    <>
      <rect width="14" height="14" fill="#fff" />
      <path d="M7 3v2.500h5v3H7V11L2 7z" fill="#c4c4c4" />
    </>
  ),
  Forward: (
    <>
      <rect width="14" height="14" fill="#fff" />
      <path d="M7 3v2.500H2v3h5V11l5-4z" fill="#c4c4c4" />
    </>
  ),
  Save: (
    <>
      <path d="M0 0h13l1 1v13H1l-1-1z" fill="#111" />
      <rect x="3" y="1" width="8" height="5.500" fill="#fff" />
      <path d="M4 2.500h6M4 4.500h6" stroke="#111" />
      <rect x="4" y="9" width="6" height="4.500" fill="#ddd" />
      <rect x="5" y="10" width="2" height="3.500" fill="#111" />
    </>
  ),
  Undo: (
    <>
      <rect width="14" height="14" fill="#5f7ba0" />
      <path d="M4 3v4h4M4.500 6.500C7 2.500 11 4 10 7.500 9.500 9 8.500 10 7 10.500" fill="none" stroke="#b8c8dc" strokeWidth="1.400" />
    </>
  ),
  Redo: (
    <>
      <rect width="14" height="14" fill="#5f7ba0" />
      <path d="M10 3.500H7.500V6M5 4c-2 3 0 6 2.500 6S11 8 9.500 5.500" fill="none" stroke="#b8c8dc" strokeWidth="1.400" />
    </>
  ),
  Print: (
    <>
      <path d="M3 5V1.500h9L11 5z" fill="#fff" stroke="#25408f" />
      <path d="M1 5h12l.5 5h-13z" fill="#6c86cf" stroke="#1f3684" />
      <path d="M3 9.500h9l-1 3.500H3z" fill="#fff" stroke="#25408f" />
      <path d="M1 7.500h12" stroke="#1f3684" />
    </>
  ),
};

function Edge({ d, head, color, width = 0.8 }) {
  return (
    <g>
      <path d={d} fill="none" stroke={color} strokeWidth={width} />
      <path d={head} fill={color} />
    </g>
  );
}

function Graph({ className, main, calc, head, rank }) {
  const nodes = [
    ["Logger", 13, 3, 62],
    ["Calc", 23, 91, 41],
    ["Graph", 75, 91, 55],
    ["Form", 20, 179, 47],
  ];
  const labels = [["6", 49, 66], ["4", 70, 66], ["4", 7, 110], [rank[0], 49, 154], [rank[1], 70, 154]];
  return (
    <svg viewBox="0 0 134 206" className={className} role="img" aria-label="Relations Graph">
      <rect width="134" height="206" fill="#fff" />
      <Edge d="M33 28C-8 62-8 130 25 170" head="M33 179l-9-6 4-3z" color={main} />
      <Edge d="M44 28v55" head="M40 81h8l-2 11h-4z" color={main} width={4} />
      <Edge d="M53 28l38 55" head="M96 91l-7-7 4-3z" color={main} />
      <path d="M44 115v56M95 115l-37 56" fill="none" stroke={calc} />
      <path d="M42 169h4l-2 10zM53 179l3-9 4 3z" fill={head} />
      {nodes.map(([t, x, y, w]) => (
        <g key={t}>
          <rect x={x} y={y} width={w} height="24" fill="none" stroke="#222" />
          <text x={x + w / 2} y={y + 19} fontSize="19" textAnchor="middle" fill="#1a1a1a">{t}</text>
        </g>
      ))}
      {labels.map(([t, x, y], i) => (
        <text key={i} x={x} y={y} fontSize="18" textAnchor="middle" fill="#1a1a1a">{t}</text>
      ))}
    </svg>
  );
}

function GraphWindow({ place, pad, area, graph }) {
  return (
    <Window place={place} title="Relations Graph" small head="h-[25px]">
      <div className={`flex flex-1 flex-col ${pad}`}>
        <div className="mt-[10px] border-t border-[#a5a8ac] shadow-[inset_0_1px_0_#fff]" />
        <div className="flex gap-[6px] px-[2px] pt-[4px]">
          {Object.entries(TOOLS).map(([name, art]) => (
            <button key={name} aria-label={name}>
              <svg viewBox="0 0 14 14" className="size-[14px]">{art}</svg>
            </button>
          ))}
        </div>
        <div className={`mt-[7px] bg-[#d3d3d3] pl-[161px] ${SANS} ${area}`}>{graph}</div>
      </div>
      <Grip />
    </Window>
  );
}

/* ---------- add relation ---------- */

function RelationRow({ group, label, value, className }) {
  return (
    <div className={`flex items-center ${className}`}>
      <span className="w-[97px]">{group}</span>
      <span className="w-[48px]">{label}</span>
      <Select label={`${group ?? ""} ${label}`} value={value} className="h-[21px] w-[208px]" />
    </div>
  );
}

function AddRelation() {
  return (
    <Window place="left-[409px] top-[942px] h-[219px] w-[396px]" title="Add Relation">
      <div className={`flex flex-col pl-[16px] text-[11px] ${SANS}`}>
        <RelationRow className="mt-[13px]" group="File that uses" label="Module" value="Calc" />
        <RelationRow className="mt-[7px]" label="Name" value="Calc.cs" />
        <RelationRow className="mt-[8px]" group="File that is used" label="Module" value="Calc" />
        <RelationRow className="mt-[6px]" label="Name" value="Calc.cs" />
        <div className="mt-[7px] flex items-center pl-[97px]">
          <label htmlFor="rank" className="w-[48px]">Rank</label>
          <div className="flex h-5 w-[44px] items-center border border-[#aaa] bg-white pr-[1px]">
            <input id="rank" defaultValue="5" className="w-[26px] bg-transparent pl-[2px] outline-none" />
            <div className="flex flex-col gap-[1px]">
              <button aria-label="Up" className="flex h-[8px] w-[14px] items-center justify-center border border-[#b0b0b0] bg-[#eee]">
                <svg viewBox="0 0 6 3" className="h-[3px] w-[6px]"><path d="M0 3h6L3 0z" fill="#4a68a8" /></svg>
              </button>
              <button aria-label="Down" className="flex h-[8px] w-[14px] items-center justify-center border border-[#b0b0b0] bg-[#eee]">
                <svg viewBox="0 0 6 3" className="h-[3px] w-[6px]"><path d="M0 0h6L3 3z" fill="#4a68a8" /></svg>
              </button>
            </div>
          </div>
        </div>
        <div className="mt-[4px] flex justify-end gap-[8px] pr-[14px]">
          <button className={`h-[21px] w-[73px] ${BTN}`}>Add</button>
          <button className={`h-[21px] w-[73px] ${BTN}`}>Cancel</button>
        </div>
      </div>
      <Grip />
    </Window>
  );
}

/* ---------- relations view ---------- */

const REL_HEAD = ["File that uses", "Module", "File that is used", "Module", "Rate"];
const RELATIONS = [
  ["Calc.cs", "Calc", "Logger.cs", "Logger", "2"],
  ["Function.cs", "Calc", "Logger.cs", "Logger", "2"],
  ["Parser.cs", "Calc", "Logger.cs", "Logger", "2"],
  ["Form.cs", "Form", "Logger.cs", "Logger", "4"],
  ["GraphBuilder.cs", "Graph", "Logger.cs", "Logger", "4"],
  ["Form.cs", "Form", "GraphBuilder.cs", "Graph", "6"],
  ["Form.cs", "Form", "Calc.cs", "Calc", "7"],
];

function RelationsView() {
  return (
    <Window place="left-[932px] top-[928px] h-[297px] w-[624px]" title="Relations View">
      <div className={`flex pt-[13px] pl-[14px] text-[11px] ${SANS}`}>
        <div className="h-[237px] w-[525px] border border-black bg-[#ababab] p-[1px]">
          <table className="w-[521px] table-fixed border-collapse text-left">
            <colgroup>
              <col className="w-[19px]" />
              <col className="w-[110px]" />
              <col className="w-[90px]" />
              <col className="w-[110px]" />
              <col className="w-[90px]" />
              <col />
            </colgroup>
            <thead>
              <tr className={`h-[20px] border-b border-[#999] ${HEAD_BG}`}>
                <th className="border-r border-[#999] bg-white" />
                {REL_HEAD.map((h, i) => (
                  <th key={i} className="border-r border-[#e0e0e0] py-0 pl-[7px] font-normal">{h}</th>
                ))}
              </tr>
            </thead>
            <tbody>
              {RELATIONS.map((r, i) => (
                <tr key={i} className="h-[22px]">
                  <td className="border-r border-b border-r-[#999] border-b-[#eee] bg-[linear-gradient(90deg,#fff_0_60%,#eaecee_60%)]" />
                  {r.map((c, j) => (
                    <td key={j} className={`border-r border-b border-[#999] py-0 pl-[3px] ${i + j === 0 ? "bg-[#3399ff] text-white" : "bg-white"}`}>{c}</td>
                  ))}
                </tr>
              ))}
            </tbody>
          </table>
        </div>
        <div className="ml-[7px] flex flex-col gap-[8px] pt-[1px]">
          <button className={`h-[23px] w-[50px] ${BTN}`}>Add</button>
          <button className={`h-[23px] w-[50px] ${BTN}`}>Delete</button>
        </div>
      </div>
      <Grip />
    </Window>
  );
}

/* ---------- flow arrows ---------- */

const ARROWS = [
  [139, 66, 235, 460],
  [132, 87, 824, 223],
  [1234, 445, 1166, 488],
  [1228, 537, 1742, 273],
  [1835, 446, 1494, 488],
  [357, 806, 500, 654],
  [693, 784, 850, 699],
  [1017, 543, 1205, 939],
  [1038, 568, 1912, 935],
  [1029, 520, 1097, 520],
  [1238, 564, 1653, 698],
  [1491, 982, 791, 1000],
  [687, 1130, 941, 1094],
];

function Arrows() {
  return (
    <svg className="pointer-events-none absolute top-0 left-0 z-30 h-[1252px] w-[2160px]" viewBox="0 0 2160 1252" aria-hidden="true">
      {ARROWS.map(([x1, y1, x2, y2], i) => {
        const len = Math.hypot(x2 - x1, y2 - y1);
        const ux = (x2 - x1) / len;
        const uy = (y2 - y1) / len;
        const bx = x2 - ux * 24;
        const by = y2 - uy * 24;
        return (
          <g key={i}>
            <path d={`M${x1} ${y1}L${bx} ${by}`} stroke="#333" strokeWidth="5" strokeDasharray="15 5" />
            <path d={`M${x2} ${y2}L${bx - uy * 12} ${by + ux * 12}L${bx + uy * 12} ${by - ux * 12}z`} fill="#333" />
          </g>
        );
      })}
    </svg>
  );
}

export default function App() {
  return (
    <main className="relative min-h-screen w-full overflow-hidden bg-white text-black">
      <MainWindowProject />
      <OpenDialog />
      <AddPatch />
      <SaveDialog />
      <BrowseDialog />
      <MainWindowLoaded />
      <GraphWindow
        place="left-[1643px] top-[531px] h-[290px] w-[492px]"
        pad="pl-[11px] pr-[10px]"
        area="h-[206px]"
        graph={<Graph className="h-[206px] w-[134px]" main="#f00" calc="#f2d94a" head="#ff0" rank={["0", "0"]} />}
      />
      <GraphWindow
        place="left-[1641px] top-[925px] h-[293px] w-[498px]"
        pad="pl-[11px] pr-[11px]"
        area="h-[209px]"
        graph={<Graph className="h-[209px] w-[136px]" main="#000" calc="#333" head="#000" rank={["7", "6"]} />}
      />
      <AddRelation />
      <RelationsView />
      <Arrows />
    </main>
  );
}
